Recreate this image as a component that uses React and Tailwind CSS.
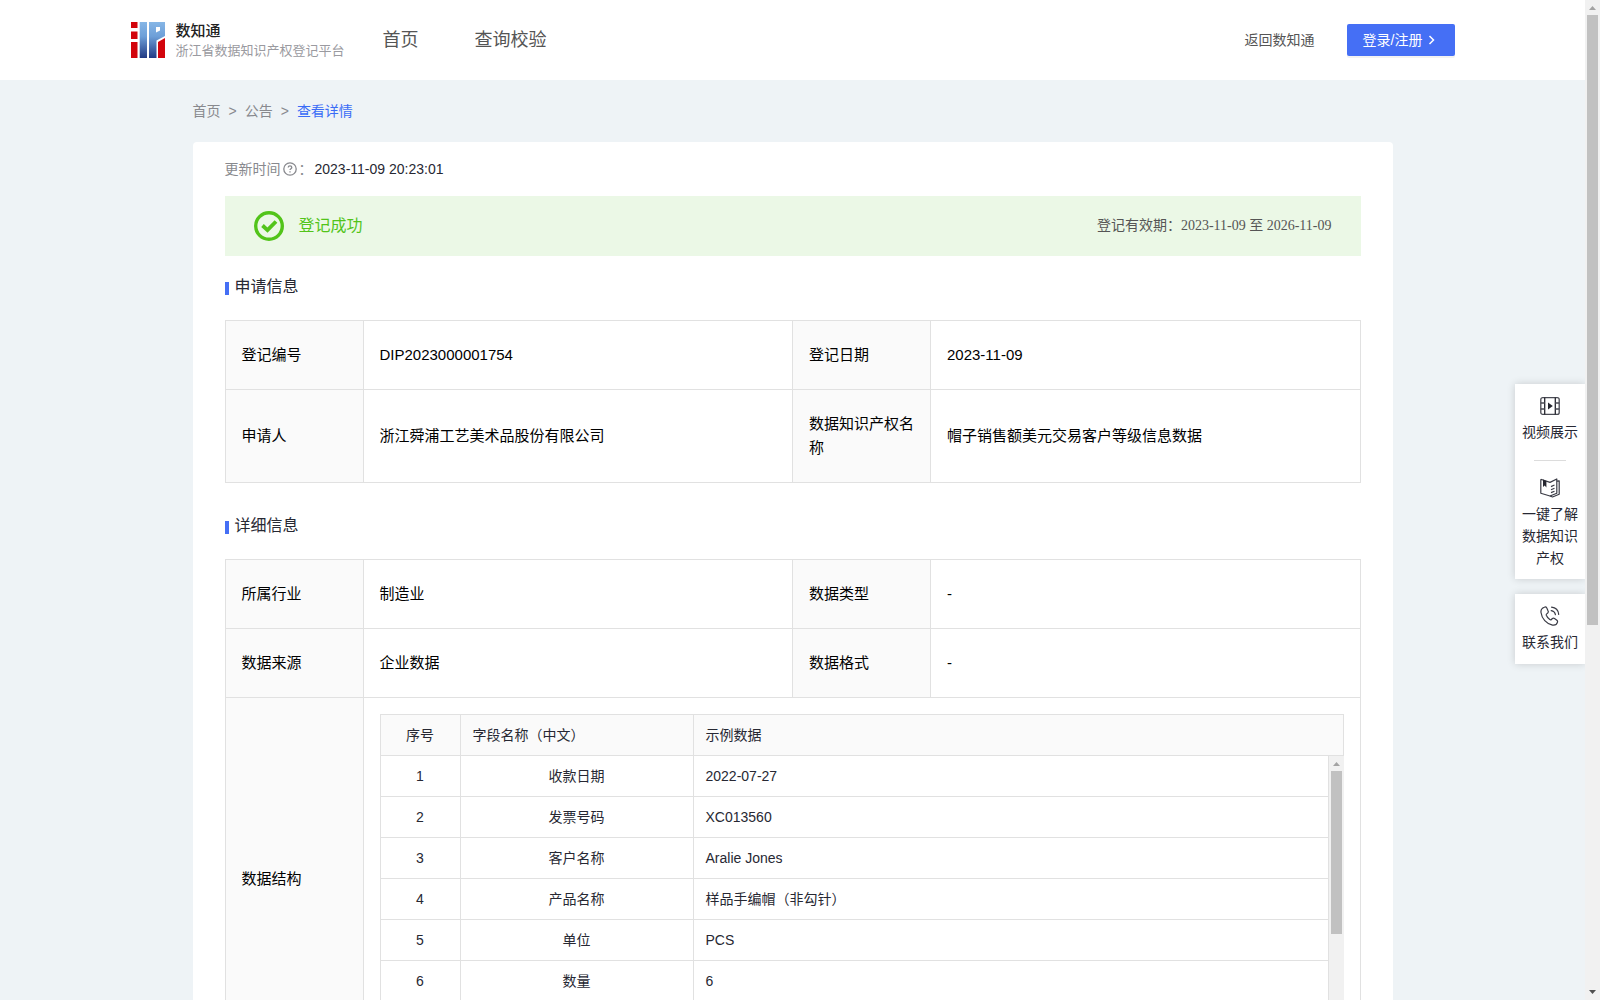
const SANS = 'font-["Liberation_Sans","Noto_Sans_CJK_SC",sans-serif]';

function Logo() {
  return (
    <svg width="34" height="36" viewBox="0 0 34 36" aria-hidden="true">
      <defs>
        <linearGradient id="logoBlue" x1="0" y1="0" x2="0" y2="36" gradientUnits="userSpaceOnUse">
          <stop offset="0" stopColor="#86b6e6" />
          <stop offset="0.4" stopColor="#6d9fd8" />
          <stop offset="1" stopColor="#213a84" />
        </linearGradient>
      </defs>
      <path fill="#d2040c" d="M0 0h6.500v6H0zM0 9.500h6.500v7.500H0zM0 20h6.500v16H0z" />
      <path fill="url(#logoBlue)" d="M8.700 0h7.300v36h-7.300z" />
      <path fill="url(#logoBlue)" fillRule="evenodd" d="M18 0h16v14l-8.500 4.500V36H18zM25 5v5.500l4-2V5z" />
      <path fill="#d2040c" d="M27 20l7-4v20h-7z" />
    </svg>
  );
}

function FilmIcon() {
  return (
    <svg width="20" height="20" viewBox="0 0 20 20" fill="none" stroke="#4a4b54" strokeWidth="1.300" aria-hidden="true">
      <rect x="0.800" y="1.600" width="18.400" height="16.800" rx="2" />
      <path d="M4.700 1.600v16.800M15.300 1.600v16.800" stroke="#25262f" />
      <path d="M.8 7h3.900M.8 13h3.900M15.300 7h3.900M15.300 13h3.900" />
      <path d="M8 6.600v6.800l4.800-3.400z" fill="#25262f" stroke="none" />
    </svg>
  );
}

function BookIcon() {
  return (
    <svg width="20" height="20" viewBox="0 0 20 20" fill="none" stroke="#3a3b45" strokeWidth="1.200" strokeLinejoin="round" aria-hidden="true">
      <path d="M.8 1.200L10 4.400 16.800 1v14.200L10 18 .8 15.200V1.200" />
      <path d="M16.800 3.200l2.400-.4v13.400L12.500 19 10 18" />
      <path d="M3 1.500v7.500l1.700-1.400L6.400 9.600V3z" fill="#25262f" stroke="none" />
      <path d="M11 8.600l3.500-1.600M11 11.800l3.500-1.600M11 14.600l3.500-1.400" />
    </svg>
  );
}

function PhoneIcon() {
  return (
    <svg width="20" height="20" viewBox="0 0 20 20" fill="none" stroke="#3a3b45" strokeWidth="1.200" strokeLinejoin="round" strokeLinecap="round" aria-hidden="true">
      <path d="M4.300 1.200C2 2 .7 4 1 6.500c.7 6 5.500 11.300 11.500 12.600 2.400.4 4.400-.9 5-3 .2-.8 0-1.400-.6-1.900l-2.400-1.800c-.7-.5-1.500-.4-2.100.1l-1 1c-.5.5-1 .5-1.600.1C8.200 12.500 7 11 6.300 9.300c-.2-.6-.1-1 .4-1.400l1-.9c.6-.6.8-1.300.4-2.100L6.800 2C6.300 1.100 5.300.8 4.300 1.200z" />
      <path d="M11.200 4.600c2.200.3 3.800 1.900 4.200 4.100M11.600 1.200c4 .4 6.700 3.200 7.100 7.200" />
    </svg>
  );
}

function Scrollbar({ thumb }) {
  return (
    <div aria-hidden="true" className="flex w-[15px] shrink-0 flex-col items-center bg-[#f1f1f1]">
      <svg width="15" height="15" viewBox="0 0 15 15"><path d="M4 10h7L7.500 6z" fill="#a3a3a3" /></svg>
      <div className={`w-[11px] bg-[#c1c1c1] ${thumb}`} />
      <svg className="mt-auto" width="15" height="15" viewBox="0 0 15 15"><path d="M4 5h7L7.500 9z" fill="#505050" /></svg>
    </div>
  );
}

function SectionTitle({ children }) {
  return (
    <h2 className="flex items-center gap-1.5 text-base leading-6 text-[#272833]">
      <span className="mt-0.5 h-[13px] w-1 bg-[#456ff5]" />
      {children}
    </h2>
  );
}

function Label({ children }) {
  return <th scope="row" className="border border-[#e1e1e1] bg-[#fafafa] px-4 text-left font-normal">{children}</th>;
}

function Value({ children, ...rest }) {
  return <td className="border border-[#e1e1e1] px-4" {...rest}>{children}</td>;
}

function InfoTable({ children }) {
  return (
    <table className="w-full table-fixed border-collapse text-[15px] leading-6 text-black">
      <colgroup>
        <col className="w-[138px]" />
        <col />
        <col className="w-[138px]" />
        <col />
      </colgroup>
      <tbody>{children}</tbody>
    </table>
  );
}

const fields = [
  ['收款日期', '2022-07-27'],
  ['发票号码', 'XC013560'],
  ['客户名称', 'Aralie Jones'],
  ['产品名称', '样品手编帽（非勾针）'],
  ['单位', 'PCS'],
  ['数量', '6'],
];

function FieldCols() {
  return (
    <colgroup>
      <col className="w-20" />
      <col className="w-[233px]" />
      <col />
    </colgroup>
  );
}

function StructureTable() {
  const cell = 'border border-[#e1e1e1] px-3 font-normal';
  return (
    <div className="text-sm text-[#272833]">
      <table className="w-full table-fixed border-collapse">
        <FieldCols />
        <thead>
          <tr className="h-[41px] bg-[#fafafa] text-left">
            <th className={`${cell} text-center`}>序号</th>
            <th className={cell}>字段名称（中文）</th>
            <th className={cell}>示例数据</th>
          </tr>
        </thead>
      </table>
      <div className="flex h-[287px]">
        <div className="min-w-0 flex-1 overflow-hidden">
          <table className="-mt-px w-full table-fixed border-collapse">
            <FieldCols />
            <tbody>
              {fields.map(([name, sample], i) => (
                <tr key={name} className="h-[41px]">
                  <td className={`${cell} text-center`}>{i + 1}</td>
                  <td className={`${cell} text-center`}>{name}</td>
                  <td className={cell}>{sample}</td>
                </tr>
              ))}
            </tbody>
          </table>
        </div>
        <Scrollbar thumb="h-[163px]" />
      </div>
    </div>
  );
}

function SideDock() {
  const card = 'w-[70px] bg-white px-[7px] shadow-[0_0_8px_rgba(0,0,0,0.16)]';
  const item = 'flex w-full flex-col items-center gap-[5px] text-center text-sm leading-[22px] text-[#272833]';
  return (
    <aside className="absolute top-[384px] right-0 flex flex-col gap-[15px]">
      <div className={`${card} flex flex-col items-center pt-3 pb-2.5`}>
        <button type="button" className={item}><FilmIcon />视频展示</button>
        <div className="my-[17px] h-px w-8 bg-[#dcdcdc]" />
        <button type="button" className={item}><BookIcon />一键了解数据知识产权</button>
      </div>
      <div className={`${card} pt-3 pb-[11px]`}>
        <button type="button" className={item}><PhoneIcon />联系我们</button>
      </div>
    </aside>
  );
}

export default function App() {
  return (
    <div className={`flex h-screen overflow-hidden bg-[#eef3f6] ${SANS}`}>
      <div className="relative min-w-0 flex-1 overflow-hidden">
        <header className="bg-white">
          <div className="mx-auto flex h-20 max-w-[1324px] items-center">
            <a href="#" className="flex items-center gap-[11px]">
              <Logo />
              <span className="flex flex-col pt-0.5">
                <span className="text-[15px] leading-5 font-medium text-[#222]">数知通</span>
                <span className="text-[13px] leading-5 text-[#9a9aa0]">浙江省数据知识产权登记平台</span>
              </span>
            </a>
            <nav className="ml-[38px] flex gap-14 text-lg text-[#555]">
              <a href="#">首页</a>
              <a href="#">查询校验</a>
            </nav>
            <a href="#" className="ml-auto text-sm text-[#555]">返回数知通</a>
            <button type="button" className="ml-8 flex h-8 w-[108px] items-center gap-1.5 rounded-xs bg-[#456ff5] pl-4 text-sm text-white shadow-[0_2px_0_rgba(0,0,0,0.05)]">
              登录/注册
              <svg width="8" height="10" viewBox="0 0 8 10" fill="none" stroke="#fff" strokeWidth="1.500" aria-hidden="true"><path d="M1.500 1l4 4-4 4" /></svg>
            </button>
          </div>
        </header>

        <div className="mx-auto max-w-[1200px]">
          <nav className="flex h-[62px] items-center gap-2 text-sm text-[#88898e]">
            <a href="#">首页</a>
            <span>&gt;</span>
            <a href="#">公告</a>
            <span>&gt;</span>
            <a href="#" className="text-[#3a6cf6]">查看详情</a>
          </nav>

          <main className="rounded-t bg-white px-8 pb-8">
            <div className="flex h-[54px] items-center text-sm text-[#88898e]">
              更新时间
              <svg className="mr-0.5 ml-0.5" width="14" height="14" viewBox="0 0 14 14" fill="none" stroke="#88898e" strokeWidth="1.300" aria-hidden="true">
                <circle cx="7" cy="7" r="6.200" />
                <path d="M5.200 5.600c0-1.100.8-1.700 1.800-1.700s1.800.7 1.800 1.600c0 1.200-1.800 1.300-1.800 2.600M7 9.200v1.300" />
              </svg>
              ：
              <time className="ml-0.5 text-[#272833]">2023-11-09 20:23:01</time>
            </div>

            <div className="flex h-[60px] items-center justify-between bg-[#ebf8e6] px-[29px]">
              <div className="flex items-center gap-[15px] text-base text-[#52c41a]">
                <svg width="30" height="30" viewBox="0 0 30 30" fill="none" stroke="#52c41a" aria-hidden="true">
                  <circle cx="15" cy="15" r="13.300" strokeWidth="3.400" />
                  <path d="M8.500 14.500l5 4.700 8.500-8.700" strokeWidth="3.800" />
                </svg>
                登记成功
              </div>
              <p className='font-["Liberation_Serif","Noto_Sans_CJK_SC",serif] text-sm text-[#555]'>登记有效期：2023-11-09 至 2026-11-09</p>
            </div>

            <section className="mt-[19px]">
              <SectionTitle>申请信息</SectionTitle>
              <div className="mt-[21px]">
                <InfoTable>
                  <tr className="h-[69px]">
                    <Label>登记编号</Label>
                    <Value>DIP2023000001754</Value>
                    <Label>登记日期</Label>
                    <Value>2023-11-09</Value>
                  </tr>
                  <tr className="h-[93px]">
                    <Label>申请人</Label>
                    <Value>浙江舜浦工艺美术品股份有限公司</Value>
                    <Label>数据知识产权名称</Label>
                    <Value>帽子销售额美元交易客户等级信息数据</Value>
                  </tr>
                </InfoTable>
              </div>
            </section>

            <section className="mt-[31px]">
              <SectionTitle>详细信息</SectionTitle>
              <div className="mt-[21px]">
                <InfoTable>
                  <tr className="h-[69px]">
                    <Label>所属行业</Label>
                    <Value>制造业</Value>
                    <Label>数据类型</Label>
                    <Value>-</Value>
                  </tr>
                  <tr className="h-[69px]">
                    <Label>数据来源</Label>
                    <Value>企业数据</Value>
                    <Label>数据格式</Label>
                    <Value>-</Value>
                  </tr>
                  <tr>
                    <Label>数据结构</Label>
                    <Value colSpan={3}>
                      <div className="py-4">
                        <StructureTable />
                      </div>
                    </Value>
                  </tr>
                </InfoTable>
              </div>
            </section>
          </main>
        </div>

        <SideDock />
      </div>
      <Scrollbar thumb="h-[610px]" />
    </div>
  );
}
